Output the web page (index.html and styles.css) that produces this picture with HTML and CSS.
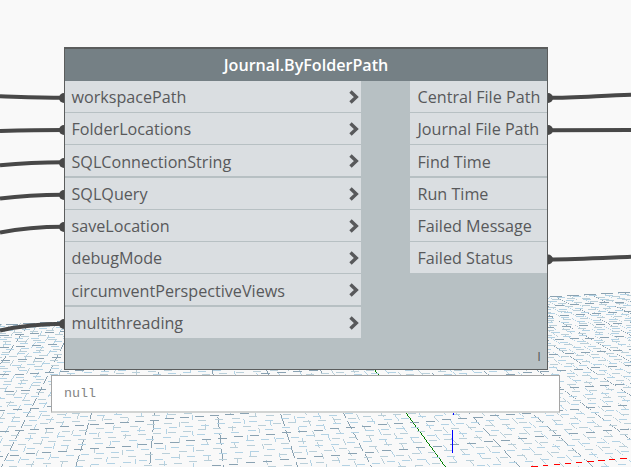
FILE: index.html
```html
<!DOCTYPE html>
<html lang="en">
<head>
<meta charset="utf-8">
<title>Journal.ByFolderPath</title>
<link rel="stylesheet" href="styles.css">
</head>
<body>
<svg class="scene" viewBox="0 0 631 467" aria-hidden="true">
  <g id="grid" shape-rendering="crispEdges"></g>
  <g class="axes" shape-rendering="crispEdges">
    <path class="axis-z" d="M453.500 413v2M452.500 430v23"/>
    <path class="axis-x" d="M531 466.500h7M543 465.500h5M554 464.500h6M565 463.500h6M576 462.500h6M587 461.500h7M598 460.500h4M602 460.500h3M609 459.500h6M620 458.500h7"/>
  </g>
  <g class="wires">
    <path d="M0 96.200C25 97 40 97.700 64 97.700"/>
    <path d="M0 131C25 130.300 40 130 64 130"/>
    <path d="M0 165.200C20 163.300 40 162.300 64 162.300"/>
    <path d="M0 198.500C20 195.800 40 194.700 64 194.700"/>
    <path d="M0 232.500C20 228.500 40 226.800 64 226.800"/>
    <path d="M0 330.500C20 326 40 323.700 64 323.700"/>
    <path d="M548 97.800C575 97.800 602 95.500 631 94.700"/>
    <path d="M548 130.200C575 130.200 602 129.900 631 129.900"/>
    <path d="M548 259.500C575 259.500 602 258 631 256.800"/>
  </g>
  <g class="ports">
    <circle cx="64" cy="98" r="5"/><circle cx="64" cy="130" r="5"/>
    <circle cx="64" cy="163" r="5"/><circle cx="64" cy="195" r="5"/>
    <circle cx="64" cy="227" r="5"/><circle cx="64" cy="324" r="5"/>
    <circle cx="548" cy="98" r="5"/><circle cx="548" cy="130" r="5"/>
    <circle cx="548" cy="259.500" r="5"/>
  </g>
</svg>
<main class="workspace">
  <section class="node">
    <h1 class="title">Journal.ByFolderPath</h1>
    <div class="body">
      <ul class="inputs">
        <li>workspacePath<svg class="chev" viewBox="0 0 10 14"><path d="M1.500 1.500L7.300 7L1.500 12.500"/></svg></li>
        <li>FolderLocations<svg class="chev" viewBox="0 0 10 14"><path d="M1.500 1.500L7.300 7L1.500 12.500"/></svg></li>
        <li class="drop">SQLConnectionString<svg class="chev" viewBox="0 0 10 14"><path d="M1.500 1.500L7.300 7L1.500 12.500"/></svg></li>
        <li>SQLQuery<svg class="chev" viewBox="0 0 10 14"><path d="M1.500 1.500L7.300 7L1.500 12.500"/></svg></li>
        <li>saveLocation<svg class="chev" viewBox="0 0 10 14"><path d="M1.500 1.500L7.300 7L1.500 12.500"/></svg></li>
        <li>debugMode<svg class="chev" viewBox="0 0 10 14"><path d="M1.500 1.500L7.300 7L1.500 12.500"/></svg></li>
        <li class="drop">circumventPerspectiveViews<svg class="chev" viewBox="0 0 10 14"><path d="M1.500 1.500L7.300 7L1.500 12.500"/></svg></li>
        <li>multithreading<svg class="chev" viewBox="0 0 10 14"><path d="M1.500 1.500L7.300 7L1.500 12.500"/></svg></li>
      </ul>
      <ul class="outputs">
        <li>Central File Path</li>
        <li>Journal File Path</li>
        <li class="drop">Find Time</li>
        <li>Run Time</li>
        <li>Failed Message</li>
        <li>Failed Status</li>
      </ul>
    </div>
    <div class="lacing">I</div>
  </section>
  <div class="preview">null</div>
</main>
<script src="grid.js"></script>
</body>
</html>
```
FILE: styles.css
```css
* { box-sizing: border-box; }
body {
  margin: 0;
  width: 631px;
  height: 467px;
  overflow: hidden;
  background: #f9f9f9;
  font-family: "Open Sans", "Noto Sans", sans-serif;
  color: #58595b;
}
.scene {
  position: absolute;
  left: 0;
  top: 0;
  width: 631px;
  height: 467px;
}
.scene path { fill: none; }
.minor { stroke: #b3d2e4; stroke-width: 1; }
.minor-alt { stroke: #bacfd9; stroke-width: 1; }
.major { stroke: #8aa2b2; stroke-width: 1; }
.axis-x { stroke: #f00; }
.axis-y { stroke: #008000; }
.axis-z { stroke: #00f; }
.wires { stroke: #484848; stroke-width: 4; }
.ports { fill: #484848; }
.workspace {
  position: relative;
  display: flex;
  flex-direction: column;
  padding: 47px 71px 0 51px;
}
.node {
  display: flex;
  flex-direction: column;
  width: 484px;
  height: 323px;
  margin-left: 13px;
  border: 1px solid #5b5d5d;
  border-top-width: 2px;
  background: #b7c0c3;
}
.title {
  margin: 0;
  height: 32px;
  background: #758085;
  color: #fff;
  font-size: 16.100px;
  line-height: 32px;
  font-weight: 600;
  text-align: center;
}
.body {
  display: flex;
  justify-content: space-between;
  flex: 1;
}
ul {
  display: flex;
  flex-direction: column;
  gap: 1px;
  margin: 0;
  padding: 0;
  list-style: none;
}
.inputs { width: 296px; }
.outputs { width: 137px; }
li {
  display: flex;
  align-items: center;
  justify-content: space-between;
  height: 31px;
  padding: 1px 2px 0 6.500px;
  background: #dadee1;
  font-size: 16.150px;
  line-height: 30px;
  white-space: nowrap;
}
.outputs li { padding-left: 7.500px; }
li.drop {
  margin-bottom: 1px;
  padding-top: 3px;
  line-height: 28px;
}
.chev {
  width: 10px;
  height: 14px;
  margin-top: -1px;
}
.drop .chev { margin-top: -3px; }
.chev path {
  fill: none;
  stroke: #58595b;
  stroke-width: 3.400;
}
.lacing {
  height: 26px;
  padding-right: 6px;
  font-size: 13px;
  line-height: 26px;
  text-align: right;
}
.preview {
  width: 509px;
  height: 38px;
  margin-top: 5px;
  padding-left: 12px;
  border: 1px solid #a5a5a5;
  border-bottom: 2px solid #d2d4d3;
  background: #fff;
  color: #858585;
  font-family: "Liberation Mono", monospace;
  font-size: 13.400px;
  line-height: 35px;
}
```
FILE: grid.js
```js
// Perspective ground grid: two families of lines, each meeting on the horizon.
const HORIZON = 106;
const VP_A = 182;
const VP_B = 4250;
const layer = document.getElementById("grid");

function addPath(d, kind) {
  const el = document.createElementNS("http://www.w3.org/2000/svg", "path");
  el.setAttribute("d", d);
  el.setAttribute("class", kind);
  layer.appendChild(el);
}

function edgeY(x) {
  return HORIZON + 202 * (VP_B - x) / (VP_B - 310);
}

function kindOf(n) {
  return n % 5 === 0 ? "major" : n % 2 ? "minor" : "minor-alt";
}

// Columns running away from the viewer, one pixel per scanline.
for (let j = -80; j <= 90; j++) {
  const slope = (406 - VP_A + j * 12.6) / 307;
  const major = j % 5 === 0;
  const flat = Math.abs(slope);
  const period = flat < 0.35 ? 16 : 11;
  const on = j === 0 ? period : major ? period * 0.7 : flat < 0.35 ? 5 : 6;
  let d = "";
  for (let y = 285; y < 467; y++) {
    const x = Math.round(VP_A + slope * (y - HORIZON));
    if (x < 0 || x > 630 || y < edgeY(x)) continue;
    if ((y + j * 7 + 1000) % period >= on) continue;
    d += "M" + x + " " + (y + 0.5) + "h1";
  }
  if (d) addPath(d, j === 0 ? "axis-y" : kindOf(j));
}

// Rows running across the plane; each dash stays flat on one pixel row.
for (let i = 50; i >= -8; i--) {
  const depth = 1 / (0.00262 + i * 0.0000466);
  const slope = depth / (VP_B - 310);
  const major = i % 5 === 0;
  const step = 15 + (i + 9) % 3;
  let d = "";
  for (let x = -((i * 11 + 600) % step); x < 631; x += step) {
    if (i === 0 && x > 524) break;
    const y = Math.round(HORIZON + depth + slope * (310 - x)) + 0.5;
    const len = i === 50 ? 12 : major ? 9 : 8;
    d += "M" + x + " " + y + "h" + len;
  }
  addPath(d, kindOf(i));
}
```
